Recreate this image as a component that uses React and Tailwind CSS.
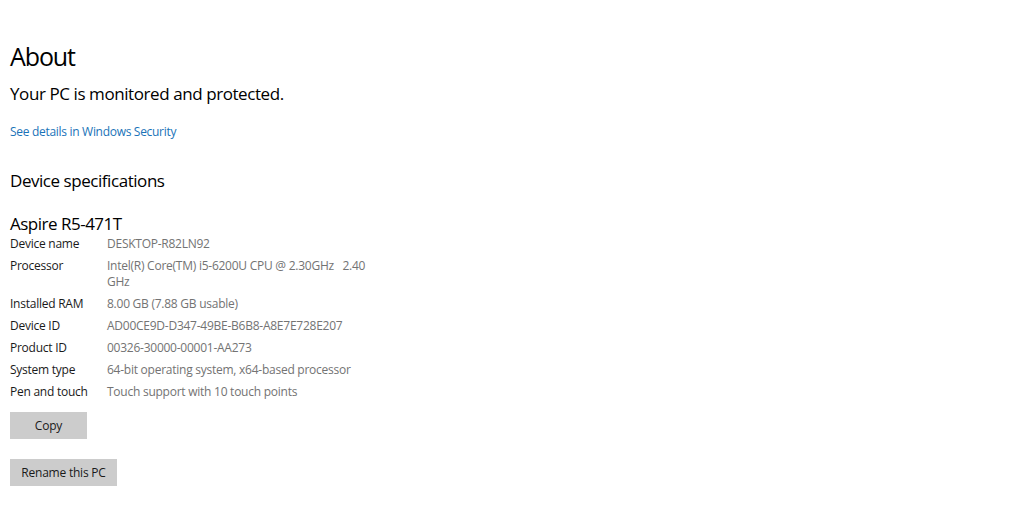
export default function App() {
  const rows = [
    ["Device name", "DESKTOP-R82LN92"],
    ["Processor", "Intel(R) Core(TM) i5-6200U CPU @ 2.30GHz\u00a0\u00a0 2.40 GHz"],
    ["Installed RAM", "8.00 GB (7.88 GB usable)"],
    ["Device ID", "AD00CE9D-D347-49BE-B6B8-A8E7E728E207"],
    ["Product ID", "00326-30000-00001-AA273"],
    ["System type", "64-bit operating system, x64-based processor"],
    ["Pen and touch", "Touch support with 10 touch points"],
  ];
  return (
    <div className="w-[1024px] h-[528px] bg-white pl-[10px] pt-[38px] text-black" style={{ fontFamily: '"Open Sans", sans-serif' }}>
      <h1 className="text-[25px] leading-[36px] font-normal tracking-[-1.1px]">About</h1>
      <p className="mt-[8px] text-[17px] leading-[24px] tracking-[-0.42px]">Your PC is monitored and protected.</p>
      <p className="mt-[17px] text-[12px] leading-[18px] text-[#1a73b8] tracking-[-0.3px]">See details in Windows Security</p>
      <h2 className="mt-[28px] text-[17px] leading-[24px] tracking-[-0.45px]">Device specifications</h2>
      <p className="mt-[19px] text-[17px] leading-[24px] tracking-[-0.5px]">Aspire R5-471T</p>
      <div className="flex flex-col gap-[6px] text-[12px] leading-[16px] tracking-[-0.25px]">
        {rows.map(([k, v]) => (
          <div key={k} className="flex">
            <div className="w-[97px] shrink-0 text-[#1a1a1a]">{k}</div>
            <div className="w-[272px] text-[#737373]">{v}</div>
          </div>
        ))}
      </div>
      <button className="mt-[12px] block w-[77px] h-[27px] bg-[#cccccc] text-[12px] text-[#1a1a1a] tracking-[-0.22px]">Copy</button>
      <button className="mt-[20px] block w-[107px] h-[27px] bg-[#cccccc] text-[12px] text-[#1a1a1a] tracking-[-0.22px]">Rename this PC</button>
    </div>
  );
}
